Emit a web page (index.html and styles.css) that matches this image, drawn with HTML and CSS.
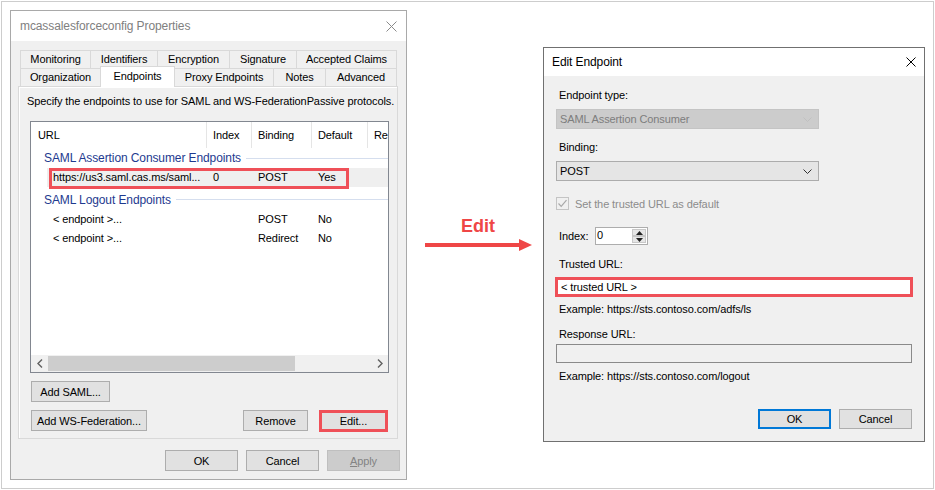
FILE: index.html
```html
<!DOCTYPE html>
<html>
<head>
<meta charset="utf-8">
<title>Endpoints</title>
<link rel="stylesheet" href="styles.css">
</head>
<body>
<div class="frame">
  <div class="dlg dlg-left">
    <div class="titlebar inactive">
      <span>mcassalesforceconfig Properties</span>
      <svg class="close" width="11" height="11" viewBox="0 0 11 11"><path d="M0.5 0.5L10.5 10.5M10.5 0.5L0.5 10.5" stroke="#8a8a8a" stroke-width="1" fill="none"/></svg>
    </div>
    <div class="left-body">
      <div class="tabs">
        <div class="tab-row">
          <div class="tab t71">Monitoring</div>
          <div class="tab t68">Identifiers</div>
          <div class="tab t73">Encryption</div>
          <div class="tab t68">Signature</div>
          <div class="tab t101">Accepted Claims</div>
        </div>
        <div class="tab-row">
          <div class="tab t81">Organization</div>
          <div class="tab t75 selected">Endpoints</div>
          <div class="tab t100">Proxy Endpoints</div>
          <div class="tab t53">Notes</div>
          <div class="tab t72">Advanced</div>
        </div>
      </div>
      <div class="panel">
        <p class="desc">Specify the endpoints to use for SAML and WS-FederationPassive protocols.</p>
        <div class="listview">
          <div class="lv-header">
            <div class="col c-url">URL</div>
            <div class="col c-idx">Index</div>
            <div class="col c-bind">Binding</div>
            <div class="col c-def">Default</div>
            <div class="col c-re">Re</div>
          </div>
          <div class="lv-body">
            <div class="group"><span>SAML Assertion Consumer Endpoints</span><i class="gline"></i></div>
            <div class="row sel">
              <div class="cell c-url">https://us3.saml.cas.ms/saml...</div>
              <div class="cell c-idx">0</div>
              <div class="cell c-bind">POST</div>
              <div class="cell c-def">Yes</div>
              <div class="hl"></div>
            </div>
            <div class="group g2"><span>SAML Logout Endpoints</span><i class="gline"></i></div>
            <div class="row">
              <div class="cell c-url">&lt; endpoint &gt;...</div>
              <div class="cell c-idx"></div>
              <div class="cell c-bind">POST</div>
              <div class="cell c-def">No</div>
            </div>
            <div class="row">
              <div class="cell c-url">&lt; endpoint &gt;...</div>
              <div class="cell c-idx"></div>
              <div class="cell c-bind">Redirect</div>
              <div class="cell c-def">No</div>
            </div>
          </div>
          <div class="hscroll">
            <div class="sb-arrow"><svg width="6" height="9" viewBox="0 0 6 9"><path d="M5 0.5L1 4.5L5 8.5" stroke="#606060" stroke-width="1.4" fill="none"/></svg></div>
            <div class="sb-track"><div class="sb-thumb"></div></div>
            <div class="sb-arrow"><svg width="6" height="9" viewBox="0 0 6 9"><path d="M1 0.5L5 4.5L1 8.5" stroke="#606060" stroke-width="1.4" fill="none"/></svg></div>
          </div>
        </div>
        <div class="btn-row">
          <button class="btn w79">Add SAML...</button>
        </div>
        <div class="btn-row split">
          <button class="btn w116">Add WS-Federation...</button>
          <span class="spacer"></span>
          <button class="btn w65">Remove</button>
          <button class="btn edit-btn">Edit...</button>
        </div>
      </div>
      <div class="footer">
        <button class="btn w73">OK</button>
        <button class="btn w73">Cancel</button>
        <button class="btn w73 disabled"><u>A</u>pply</button>
      </div>
    </div>
  </div>

  <div class="callout">
    <div class="callout-text">Edit</div>
    <svg width="108" height="12" viewBox="0 0 108 12"><path d="M0 6H96" stroke="#ef4646" stroke-width="4"/><path d="M94 0L107 6L94 12Z" fill="#ef4646"/></svg>
  </div>

  <div class="dlg dlg-right">
    <div class="titlebar">
      <span>Edit Endpoint</span>
      <svg class="close" width="10" height="10" viewBox="0 0 10 10"><path d="M0.5 0.5L9.5 9.5M9.5 0.5L0.5 9.5" stroke="#000" stroke-width="1" fill="none"/></svg>
    </div>
    <div class="right-body">
      <div class="lbl l1">Endpoint type:</div>
      <div class="select disabled-select">
        <span>SAML Assertion Consumer</span>
        <svg width="9" height="5" viewBox="0 0 9 5"><path d="M0.5 0.5L4.5 4.5L8.5 0.5" stroke="#c0c0c0" stroke-width="1" fill="none"/></svg>
      </div>
      <div class="lbl l2">Binding:</div>
      <div class="select">
        <span>POST</span>
        <svg width="9" height="5" viewBox="0 0 9 5"><path d="M0.5 0.5L4.5 4.5L8.5 0.5" stroke="#303030" stroke-width="1" fill="none"/></svg>
      </div>
      <div class="check-row">
        <span class="checkbox"><svg width="11" height="11" viewBox="0 0 11 11"><path d="M1.5 5.5L4.2 8.3L9.5 2.2" stroke="#a8a8a8" stroke-width="1.2" fill="none"/></svg></span>
        <span class="check-label">Set the trusted URL as default</span>
      </div>
      <div class="index-row">
        <span class="lbl idx-lbl">Index:</span>
        <div class="spin">
          <span class="spin-val">0</span>
          <div class="spin-btns">
            <div class="spin-btn"><svg width="7" height="4" viewBox="0 0 7 4"><path d="M0 4L3.5 0L7 4Z" fill="#222"/></svg></div>
            <div class="spin-btn"><svg width="7" height="4" viewBox="0 0 7 4"><path d="M0 0L3.5 4L7 0Z" fill="#222"/></svg></div>
          </div>
        </div>
      </div>
      <div class="lbl l3">Trusted URL:</div>
      <div class="textbox trusted">&lt; trusted URL &gt;</div>
      <div class="lbl ex1">Example: https://sts.contoso.com/adfs/ls</div>
      <div class="lbl l4">Response URL:</div>
      <div class="textbox response"></div>
      <div class="lbl ex2">Example: https://sts.contoso.com/logout</div>
      <div class="dlg-btns">
        <button class="btn w73 default">OK</button>
        <button class="btn w73">Cancel</button>
      </div>
    </div>
  </div>
</div>
</body>
</html>
```
FILE: styles.css
```css
* { box-sizing: border-box; }
html, body { margin: 0; padding: 0; background: #fff; }
body {
  font-family: "Liberation Sans", Arial, sans-serif;
  font-size: 11px;
  letter-spacing: -0.1px;
  color: #000;
  width: 935px;
  height: 490px;
  overflow: hidden;
}
.frame {
  width: 933px;
  height: 488px;
  margin: 1px;
  border: 1px solid #cdcdcd;
  background: #fff;
  display: flex;
  align-items: flex-start;
}
.dlg {
  display: flex;
  flex-direction: column;
  background: #f0f0f0;
  flex: none;
}
.titlebar {
  display: flex;
  align-items: center;
  justify-content: space-between;
  background: #fff;
  flex: none;
  font-size: 12px;
}
.close { display: block; }

/* Left dialog */
.dlg-left {
  width: 397px;
  height: 470px;
  margin: 8px 0 0 8px;
  border: 1px solid #a9a9a9;
}
.dlg-left .titlebar {
  height: 30px;
  padding: 0 9px;
  color: #808080;
}
.left-body {
  flex: 1;
  padding: 9px 6px 0 7px;
}
.tabs { margin-left: 2px; width: 377px; }
.tab-row { display: flex; height: 18px; }
.tab {
  height: 18px;
  border: 1px solid #d9d9d9;
  border-bottom: none;
  margin-right: -1px;
  text-align: center;
  line-height: 17px;
  background: #f0f0f0;
  white-space: nowrap;
}
.tab.selected {
  position: relative;
  z-index: 2;
  margin-top: -2px;
  height: 21px;
  line-height: 18px;
  background: #fff;
}
.t53 { width: 53px; }
.t68 { width: 68px; }
.t71 { width: 71px; }
.t72 { width: 72px; }
.t73 { width: 73px; }
.t75 { width: 75px; }
.t81 { width: 81px; }
.t100 { width: 100px; }
.t101 { width: 101px; }

.panel {
  width: 380px;
  height: 353px;
  border: 1px solid #d9d9d9;
  box-shadow: inset 1px 1px 0 #fff;
  background: #f0f0f0;
}
.desc {
  margin: 0;
  padding: 7px 0 0 8px;
  line-height: 15px;
  white-space: nowrap;
}
.listview {
  margin: 12px 0 0 11px;
  width: 359px;
  height: 252px;
  border: 1px solid #828790;
  background: #fff;
  display: flex;
  flex-direction: column;
  overflow: hidden;
}
.lv-header { display: flex; height: 26px; flex: none; }
.col {
  line-height: 26px;
  padding-left: 6px;
  border-left: 1px solid #e5e5e5;
  white-space: nowrap;
  overflow: hidden;
}
.col.c-url { border-left: none; padding-left: 7px; }
.c-url { width: 175px; flex: none; }
.c-idx { width: 45px; flex: none; }
.c-bind { width: 60px; flex: none; }
.c-def { width: 56px; flex: none; }
.c-re { flex: 1; }

.lv-body { flex: 1; }
.group {
  display: flex;
  align-items: center;
  height: 20px;
  padding-left: 13px;
  color: #1e3a8f;
  white-space: nowrap;
  font-size: 12px;
}
.group.g2 { margin-top: 2px; height: 21px; }
.gline {
  flex: 1;
  height: 1px;
  background: #d5deee;
  margin-left: 5px;
}
.row {
  display: flex;
  height: 19px;
  line-height: 19px;
  position: relative;
}
.row.sel { background: linear-gradient(to right, transparent 16px, #efefef 16px); }
.cell { padding-left: 7px; white-space: nowrap; }
.cell.c-url { padding-left: 22px; }
.hl {
  position: absolute;
  left: 18px;
  top: 0;
  width: 300px;
  height: 21px;
  border: 3px solid #ef5058;
}
.hscroll {
  height: 17px;
  flex: none;
  display: flex;
  background: #f0f0f0;
}
.sb-arrow {
  width: 17px;
  flex: none;
  display: flex;
  align-items: center;
  justify-content: center;
}
.sb-track { flex: 1; padding: 1px 0; }
.sb-thumb { width: 247px; height: 100%; background: #cdcdcd; }

.btn {
  font: inherit;
  letter-spacing: -0.1px;
  color: #000;
  height: 21px;
  padding: 0;
  background: #e1e1e1;
  border: 1px solid #adadad;
  flex: none;
  white-space: nowrap;
}
.btn u { text-decoration: underline; }
.btn-row { display: flex; margin: 8px 0 0 12px; width: 357px; align-items: flex-start; }
.spacer { flex: 1; }
.w65 { width: 65px; }
.w73 { width: 73px; }
.w79 { width: 79px; }
.w116 { width: 116px; }
.edit-btn {
  width: 69px;
  height: 22px;
  margin-left: 11px;
  border: 3px solid #ef5058;
}
.footer {
  display: flex;
  justify-content: flex-end;
  gap: 8px;
  margin-top: 11px;
}
.btn.disabled {
  background: #cccccc;
  border-color: #bfbfbf;
  color: #838383;
}

/* Callout */
.callout { width: 136px; margin-top: 214px; flex: none; }
.callout-text {
  color: #ef4646;
  font-weight: bold;
  font-size: 18px;
  letter-spacing: 0;
  line-height: 20px;
  padding-left: 54px;
}
.callout svg { display: block; margin: 3px 0 0 18px; }

/* Right dialog */
.dlg-right {
  width: 382px;
  height: 395px;
  margin-top: 45px;
  border: 1px solid #707070;
}
.dlg-right .titlebar {
  height: 28px;
  padding: 0 8px;
}
.right-body {
  flex: 1;
  padding: 0 12px 0 12px;
  display: flex;
  flex-direction: column;
  align-items: flex-start;
}
.lbl { line-height: 15px; padding-left: 3px; white-space: nowrap; }
.l1 { margin-top: 12px; }
.l2 { margin-top: 11px; }
.l3 { margin-top: 12px; }
.ex1 { margin-top: 5px; }
.l4 { margin-top: 10px; }
.ex2 { margin-top: 6px; }
.select {
  width: 263px;
  height: 20px;
  margin-top: 6px;
  border: 1px solid #acacac;
  background: #e5e5e5;
  display: flex;
  align-items: center;
  justify-content: space-between;
  padding: 0 6px 0 3px;
}
.select.disabled-select {
  background: #cccccc;
  border-color: #c4c4c4;
  color: #7d7d7d;
}
.check-row {
  display: flex;
  align-items: center;
  margin-top: 15px;
  height: 15px;
}
.checkbox {
  width: 13px;
  height: 13px;
  border: 1px solid #c4c4c4;
  background: #f0f0f0;
  display: flex;
  align-items: center;
  justify-content: center;
}
.check-label { margin-left: 6px; color: #8c8c8c; }
.index-row {
  display: flex;
  align-items: center;
  margin-top: 16px;
}
.idx-lbl { width: 39px; }
.spin {
  width: 53px;
  height: 18px;
  border: 1px solid #adadad;
  background: #fff;
  display: flex;
  justify-content: space-between;
}
.spin-val { padding-left: 1px; line-height: 14px; }
.spin-btns {
  width: 15px;
  display: flex;
  flex-direction: column;
  padding: 1px 1px 1px 0;
}
.spin-btn {
  flex: 1;
  background: #e6e6e6;
  border: 1px solid #c8c8c8;
  display: flex;
  align-items: center;
  justify-content: center;
}
.textbox {
  line-height: 14px;
  white-space: nowrap;
}
.textbox.trusted {
  width: 358px;
  height: 20px;
  margin: 5px 0 0 -1px;
  border: 3px solid #ef5058;
  background: #fff;
  padding-left: 3px;
}
.textbox.response {
  width: 356px;
  height: 19px;
  margin-top: 2px;
  border: 1px solid #8a8a8a;
  background: #f0f0f0;
}
.dlg-btns {
  align-self: stretch;
  display: flex;
  justify-content: flex-end;
  gap: 8px;
  margin-top: 25px;
}
.dlg-btns .btn { height: 20px; }
.btn.default { border: 2px solid #0078d7; }
```
